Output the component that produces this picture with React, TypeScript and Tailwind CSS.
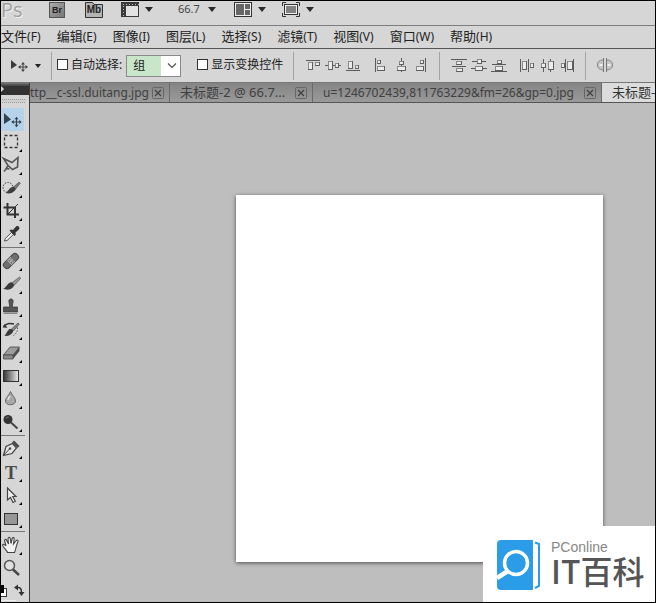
import type { ReactNode } from "react";
import clsx from "clsx";

// Photoshop CS5 workspace: application bar, menus, options bar, tabs, toolbox, canvas.

const menus = [
  ["文件", "F"],
  ["编辑", "E"],
  ["图像", "I"],
  ["图层", "L"],
  ["选择", "S"],
  ["滤镜", "T"],
  ["视图", "V"],
  ["窗口", "W"],
  ["帮助", "H"],
];

type Tool = { name: string; icon: ReactNode; active?: boolean; single?: boolean };

const toolGroups: Tool[][] = [
  [
    {
      name: "移动工具",
      active: true,
      single: true,
      icon: (
        <>
          <path d="M3 5v11l7-4.500z" fill="#33424f" />
          <path d="M15.500 10v8M11.500 14h8" stroke="#33424f" strokeWidth="1.200" />
          <path d="M15.500 8.800l2 2.500h-4zM15.500 19.200l2-2.500h-4zM10.300 14l2.500-2v4zM20.700 14l-2.500-2v4z" fill="#33424f" />
        </>
      ),
    },
    {
      name: "选框工具",
      icon: (
        <rect x="3.500" y="4.500" width="13" height="12" fill="none" stroke="#333" strokeWidth="1.300" strokeDasharray="3 2" />
      ),
    },
    {
      name: "套索工具",
      icon: (
        <path
          d="M3 17.500l2.500-3M7 11.500L2.500 4.500l8.500 4L17 3.500l-.5 9.500-5 2.500L7 11.500l-1.800 3 3.300.5"
          fill="none"
          stroke="#555"
          strokeWidth="1.600"
        />
      ),
    },
    {
      name: "快速选择工具",
      icon: (
        <>
          <circle cx="7" cy="10.500" r="5" fill="none" stroke="#333" strokeDasharray="1.500 1.300" />
          <path d="M12 10.500l6-5.500 1.300 1.200-5 6.300z" fill="#777" stroke="#444" strokeWidth=".6" />
          <path d="M4.500 16c2-.5 3-4.500 6.500-6 2.500-.5 4.500 1 3 3.500-2.500 3-6 3.500-9.500 2.500z" fill="#3d3d3d" />
        </>
      ),
    },
    {
      name: "裁剪工具",
      icon: (
        <>
          <path d="M6.500 3v11.500H18M2.500 7.500h11.500V18" fill="none" stroke="#333" strokeWidth="2" />
          <path d="M6.500 14.500L17 4" stroke="#333" />
        </>
      ),
    },
    {
      name: "吸管工具",
      icon: (
        <>
          <path d="M10.500 9.500l2 2L6 17.500l-2.500.5.8-2.500z" fill="#eee" stroke="#555" />
          <path d="M8.500 7.500l1.500-1 2 .5 3-3.500c2-1.500 4.500 1 3 3l-3.500 3 .3 2-1.300 1.500z" fill="#333" />
        </>
      ),
    },
  ],
  [
    {
      name: "修复画笔",
      icon: (
        <g transform="rotate(-45 10 11)">
          <rect x="1" y="7.500" width="18" height="7" rx="3" fill="#6e6e6e" stroke="#484848" />
          <rect x="7" y="7.500" width="6" height="7" fill="#aaa" stroke="#555" strokeWidth=".7" />
          <path d="M8.500 9.500h1M11 9.500h1M8.500 12.500h1M11 12.500h1" stroke="#333" />
        </g>
      ),
    },
    {
      name: "画笔工具",
      icon: (
        <>
          <path d="M10 10.500L18.500 4l1.300 1.200-7.300 7.800z" fill="#999" stroke="#555" strokeWidth=".7" />
          <path d="M2 15.500c3-.5 3.500-4 7-6 2.500-.5 5 1.500 3.500 4-2.500 3.500-7 4-10.500 2z" fill="#3b3b3b" />
        </>
      ),
    },
    {
      name: "仿制图章",
      icon: (
        <>
          <path d="M8 6a2.200 2.200 0 1 1 4 0l-.8 5h5.300v5h-14v-5h6.300z" fill="#555" stroke="#333" strokeWidth=".7" />
          <path d="M2.500 17.500h14" stroke="#888" />
        </>
      ),
    },
    {
      name: "历史记录画笔",
      icon: (
        <>
          <path d="M3 7.500c3-4 6-3 10-2.500" fill="none" stroke="#333" strokeWidth="1.500" />
          <path d="M1.500 8.500l5 .3L3.500 5z" fill="#333" />
          <path d="M10 10.500l7-6.500 1.300 1-6 7z" fill="#888" stroke="#444" strokeWidth=".7" />
          <path d="M3 16.500c2-.5 2.500-4 5.500-6.500 2.500-.5 4.500 1 3.200 3.500-2.300 3-5.200 4-8.700 3z" fill="#3b3b3b" />
          <path d="M16.500 8.500c0 4-1 6-4 8" fill="none" stroke="#444" strokeDasharray="1.300 1.500" />
        </>
      ),
    },
    {
      name: "橡皮擦",
      icon: (
        <>
          <path d="M2.500 13L9 5h9.500L12 13z" fill="#9c9c9c" stroke="#484848" strokeWidth=".8" />
          <path d="M2.500 13H12v4H2.500z" fill="#8a8a8a" stroke="#484848" strokeWidth=".8" />
          <path d="M12 13l6.500-8v4L12 17z" fill="#4d4d4d" />
        </>
      ),
    },
    {
      name: "渐变工具",
      icon: <rect x="2.500" y="5.500" width="15" height="11" fill="url(#grad)" stroke="#333" />,
    },
    {
      name: "模糊工具",
      icon: (
        <>
          <path d="M9.500 3.500c1 3.500 5 6 5 9.500 0 5-10 5-10 0 0-3.500 4-6 5-9.500z" fill="#a8a8a8" stroke="#666" />
          <path d="M7 12c0-1.500 1.300-2.500 2-4" fill="none" stroke="#eee" strokeWidth="1.300" />
        </>
      ),
    },
    {
      name: "加深工具",
      icon: (
        <>
          <circle cx="7" cy="8.500" r="4.500" fill="#343434" />
          <path d="M10 11.500l6.500 6" stroke="#444" strokeWidth="2" />
          <path d="M5 7.500c.5-1 1.500-1.500 2.500-1.500" fill="none" stroke="#888" />
        </>
      ),
    },
  ],
  [
    {
      name: "钢笔工具",
      icon: (
        <>
          <path d="M2.500 17.500L5 8.500l6.500-3 4 4.500-4.500 5.500z" fill="#e4e4e4" stroke="#444" strokeWidth="1.200" />
          <path d="M2.500 17.500l6-6.500" stroke="#444" />
          <circle cx="9" cy="10.500" r="1.200" fill="#444" />
          <path d="M11 4.500L13 2.500l5.500 5.500-2 2z" fill="#4a4a4a" />
        </>
      ),
    },
    {
      name: "文字工具",
      icon: null,
    },
    {
      name: "路径选择工具",
      icon: <path d="M6.500 4v12l3-2.500 2.500 5 2.300-1.200-2.500-4.800H15z" fill="#eee" stroke="#444" strokeWidth="1.200" />,
    },
    {
      name: "矩形工具",
      icon: <rect x="3.500" y="6.500" width="13" height="11" fill="#969696" stroke="#333" />,
    },
  ],
  [
    {
      name: "抓手工具",
      icon: (
        <path
          d="M6.500 18.500C5.500 15.500 2 13.500 1.500 11c.8-1.300 2.500-.5 3.500 1L3.500 6.500C3.800 5 5.300 5 5.800 6.500L7.500 10 7 4.500C7.300 3 9 3 9.300 4.500l.7 5 1.200-5c.6-1.400 2-1 2 .3L12.500 10l2.700-3.500c1-1 2.300-.3 1.800 1-1 2.500-1.500 4-2 6-.3 2-1 3.500-1.500 5z"
          fill="#f2f2f2"
          stroke="#444"
          strokeWidth="1.100"
        />
      ),
    },
    {
      name: "缩放工具",
      single: true,
      icon: (
        <>
          <circle cx="8.500" cy="8.500" r="5" fill="#e0e0e0" stroke="#555" strokeWidth="1.500" />
          <path d="M12 12.500l6 5.500" stroke="#444" strokeWidth="2.400" />
        </>
      ),
    },
  ],
];

// small bevelled block, shaded on its lower right side
function Box({ x, y, w = 5, h = 5 }: { x: number; y: number; w?: number; h?: number }) {
  return (
    <>
      <rect x={x + 0.5} y={y + 0.5} width={w - 1} height={h - 1} fill="#ececec" stroke="#8a8a8a" />
      <path d={`M${x} ${y + h - 0.5}H${x + w - 0.5}V${y}`} fill="none" stroke="#5e5e5e" />
    </>
  );
}

const line = { stroke: "#5a5a5a", strokeWidth: 1 };

type Align = [string, ReactNode];

const alignEdges: Align[] = [
  ["顶对齐", <><path d="M1 3.500h14" {...line} /><Box x={3} y={5} w={5} h={8} /><Box x={10} y={5} w={5} h={4} /></>],
  ["垂直居中对齐", <><path d="M0 8.500h16" {...line} /><Box x={3} y={4} w={5} h={9} /><Box x={10} y={6} w={4} h={5} /></>],
  ["底对齐", <><path d="M1 13.500h14" {...line} /><Box x={3} y={4} w={5} h={8} /><Box x={10} y={8} w={4} h={4} /></>],
];

const alignSides: Align[] = [
  ["左对齐", <><path d="M2.500 1v14" {...line} /><Box x={4} y={3} w={4} h={4} /><Box x={4} y={9} w={8} h={5} /></>],
  ["水平居中对齐", <><path d="M8.500 1v14" {...line} /><Box x={6} y={4} w={5} h={4} /><Box x={4} y={9} w={9} h={5} /></>],
  ["右对齐", <><path d="M12.500 1v14" {...line} /><Box x={7} y={3} w={4} h={4} /><Box x={3} y={9} w={8} h={5} /></>],
];

const spreadRows: Align[] = [
  ["按顶分布", <><path d="M0 2.500h16M1 9.500h14" {...line} /><Box x={5} y={4} w={6} h={4} /><Box x={5} y={11} w={7} h={4} /></>],
  ["垂直居中分布", <><path d="M1 4.500h14M0 11.500h16" {...line} /><Box x={6} y={2} w={5} h={5} /><Box x={4} y={9} w={8} h={5} /></>],
  ["按底分布", <><path d="M1 7.500h14M0 14.500h16" {...line} /><Box x={6} y={3} w={5} h={4} /><Box x={4} y={9} w={8} h={5} /></>],
];

const spreadColumns: Align[] = [
  ["按左分布", <><path d="M1.500 2v13M9.500 2v13" {...line} /><Box x={3} y={4} w={5} h={9} /><Box x={11} y={6} w={4} h={5} /></>],
  ["水平居中分布", <><path d="M4.500 2v13M11.500 2v13" {...line} /><Box x={2} y={6} w={5} h={5} /><Box x={9} y={4} w={6} h={9} /></>],
  ["按右分布", <><path d="M6.500 2v13M14.500 2v13" {...line} /><Box x={2} y={6} w={4} h={5} /><Box x={8} y={4} w={6} h={9} /></>],
];

function AlignGroup({ items, className }: { items: Align[]; className?: string }) {
  return (
    <div className={clsx("mb-0.5 flex shrink-0 gap-1", className)}>
      {items.map(([name, icon]) => (
        <button key={name} aria-label={name}>
          <svg width="16" height="16" className="block">
            {icon}
          </svg>
        </button>
      ))}
    </div>
  );
}

function Caret({ className }: { className?: string }) {
  return (
    <svg width="8" height="5" className={clsx("shrink-0", className)}>
      <path d="M0 0h8L4 5z" fill="#2a2a2a" />
    </svg>
  );
}

function Divider({ className }: { className?: string }) {
  return <div className={clsx("h-7 w-px shrink-0 bg-[#a3a3a3]", className)} />;
}

function AppBar() {
  return (
    <header className="flex h-[25px] items-start border-b border-[#7d7d7d] bg-[#d6d6d6]">
      <div className="w-12 shrink-0 font-['Open_Sans',sans-serif] text-xl leading-[18px] text-[#a0a0a0] text-shadow-[1px_1px_0_#f0f0f0]">
        Ps
      </div>
      <button className="mt-px h-4 w-4 shrink-0 border border-[#555] bg-linear-to-br from-[#aaa] to-[#777] font-['Liberation_Sans',sans-serif] text-[9px] leading-[14px] font-bold text-[#222]">
        Br
      </button>
      {/* Mini Bridge sits on a folder shape, the raised tab is the svg behind the label */}
      <button className="relative ml-5 h-[17px] w-[18px] shrink-0 font-['Liberation_Sans',sans-serif] text-[10px] leading-[18px] font-bold text-[#222]">
        <svg width="18" height="17" className="absolute inset-0">
          <path d="M.5 16.500V1.500h7l1.500 2h8.500v13z" fill="#b4b4b4" stroke="#333" />
        </svg>
        <span className="relative">Mb</span>
      </button>
      <button aria-label="查看额外内容" className="ml-[18px] flex items-center gap-1.5">
        <svg width="18" height="16">
          <rect x="0" y="1" width="18" height="15" fill="#3a3a3a" />
          <rect x="5" y="5" width="12" height="10" fill="#e2e2e2" />
          <path d="M2 3.500h16" stroke="#bbb" strokeDasharray="1 2" />
          <path d="M2.500 5v11" stroke="#bbb" strokeDasharray="1 2" />
        </svg>
        <Caret />
      </button>
      <button className="ml-[25px] flex h-4 w-[38px] items-center justify-between font-['Noto_Sans',sans-serif] text-[11px] text-[#444]">
        66.7
        <Caret />
      </button>
      <button aria-label="排列文档" className="ml-[18px] flex items-center gap-1.5">
        <svg width="18" height="16">
          <rect x="0.500" y="1.500" width="17" height="14" fill="#eee" stroke="#333" />
          <path d="M2 3h8v11H2zM11 3h5v5h-5zM11 9h5v5h-5z" fill="#666" />
        </svg>
        <Caret />
      </button>
      <button aria-label="屏幕模式" className="ml-4 flex items-center gap-1.5">
        <svg width="18" height="16">
          <path d="M.5 5V1.500H4M14 1.500h3.500V5M17.500 12v3.500H14M4 15.500H.5V12" fill="none" stroke="#333" />
          <rect x="2.500" y="3.500" width="13" height="10" fill="#eee" stroke="#333" />
          <rect x="4" y="5" width="10" height="7" fill="#808080" />
        </svg>
        <Caret />
      </button>
    </header>
  );
}

function MenuBar() {
  return (
    <nav className="flex h-[23px] items-center gap-4 overflow-hidden border-b border-[#555] bg-[#d6d6d6] pb-0.5">
      {menus.map(([name, key]) => (
        <button key={key} className="flex shrink-0 items-baseline whitespace-nowrap text-[13px] leading-5">
          {name}
          <span className="text-xs leading-5">({key})</span>
        </button>
      ))}
    </nav>
  );
}

function OptionsBar() {
  return (
    <div className="flex h-[34px] items-center overflow-hidden border-b border-[#777] bg-[#d6d6d6] text-xs">
      <button aria-label="工具预设" className="ml-2 flex shrink-0 items-center gap-1.5">
        <svg width="20" height="16">
          <path d="M2 2v9l6-4z" fill="#3a3a3a" />
          <path d="M14 5v8M10 9h8" stroke="#444" />
          <path d="M14 4l2 2.500h-4zM14 14l2-2.500h-4zM9 9l2.500-2v4zM19 9l-2.500-2v4z" fill="#444" />
        </svg>
        <svg width="6" height="4">
          <path d="M0 0h6L3 4z" fill="#222" />
        </svg>
      </button>
      <Divider className="ml-2.5" />
      <label className="mb-0.5 ml-[5px] flex shrink-0 items-center gap-[3px] whitespace-nowrap">
        <input type="checkbox" className="h-[11px] w-[11px] appearance-none border border-[#333] bg-white" />
        自动选择:
      </label>
      <div className="relative ml-1 shrink-0">
        <select
          aria-label="自动选择"
          className="block h-[22px] w-[55px] appearance-none border border-[#8a8a8a] bg-white bg-linear-to-r from-[#c8e6c9] from-[34px] to-white to-[34px] pl-1.5 text-xs"
        >
          <option>组</option>
          <option>图层</option>
        </select>
        <svg width="10" height="6" className="pointer-events-none absolute top-2 right-1">
          <path d="M1 .5l4 4 4-4" fill="none" stroke="#555" strokeWidth="1.200" />
        </svg>
      </div>
      <label className="mb-0.5 ml-4 flex shrink-0 items-center gap-[3px] whitespace-nowrap">
        <input type="checkbox" className="h-[11px] w-[11px] appearance-none border border-[#333] bg-white" />
        显示变换控件
      </label>
      <Divider className="ml-2.5" />
      <AlignGroup items={alignEdges} className="ml-[11px]" />
      <AlignGroup items={alignSides} className="ml-3" />
      <Divider className="ml-2.5" />
      <AlignGroup items={spreadRows} className="ml-[11px]" />
      <AlignGroup items={spreadColumns} className="ml-3" />
      <Divider className="ml-2.5" />
      <button aria-label="自动对齐图层" className="mb-0.5 ml-2.5 shrink-0">
        <svg width="18" height="16" className="block">
          <path d="M7.500 3C3 3 1.500 5 1.500 8s1.500 4.500 6 5z" fill="#c4c4c4" stroke="#888" />
          <path d="M10.500 3c4.500 0 6 2 6 5s-1.500 4.500-6 5z" fill="#c4c4c4" stroke="#888" />
          <path d="M7.500 1v14M10.500 1v14" stroke="#777" />
          <path d="M3.500 8h3M11.500 8h3" stroke="#eee" strokeWidth="2" />
        </svg>
      </button>
    </div>
  );
}

function Tab({ title, active, className }: { title: string; active?: boolean; className?: string }) {
  return (
    <div
      className={clsx(
        "flex shrink-0 items-center border-r pt-px whitespace-nowrap",
        active ? "border-[#dcdcdc] bg-[#dcdcdc] text-[#333]" : "border-[#6a6a6a] text-[#404040]",
        className
      )}
    >
      <button role="tab" aria-selected={!!active}>
        {title}
      </button>
      <button aria-label="关闭" className="ml-auto">
        <svg width="12" height="12" className="block">
          <rect x=".5" y=".5" width="11" height="11" rx="1" fill="none" stroke="#666" />
          <path d="M3 3l6 6M9 3l-6 6" stroke="#404040" strokeWidth="1.200" />
        </svg>
      </button>
    </div>
  );
}

function Toolbox() {
  return (
    <aside className="flex w-[29px] shrink-0 flex-col border-r border-[#3a3a3a] bg-[#d6d6d6]">
      <div className="h-3 bg-linear-to-b from-[#777] to-[#333] to-30%">
        <svg width="4" height="12" className="block">
          <path d="M0 3l3 3-3 3z" fill="#ddd" />
        </svg>
      </div>
      <svg width="28" height="13" className="block">
        <path d="M1 4.500h23M1 7.500h23" stroke="#999" strokeDasharray="1 1" />
        <path d="M2 6h23" stroke="#bbb" strokeDasharray="1 1" />
      </svg>
      {toolGroups.map((group, i) => (
        <div key={i}>
          {i > 0 && (
            <div className="h-1 w-6 pt-px">
              <div className="h-px bg-[#777]" />
            </div>
          )}
          {group.map((tool) => (
            <button
              key={tool.name}
              aria-label={tool.name}
              className={clsx("relative block h-[23px] w-[23px]", tool.active && "bg-[#b4d3ea]")}
            >
              {tool.icon ? (
                <svg width="23" height="23" className="block">
                  {tool.icon}
                </svg>
              ) : (
                <span className="block w-5 text-center font-['Liberation_Serif',serif] text-lg leading-[22px] font-bold text-[#4a4a4a]">
                  T
                </span>
              )}
              {!tool.single && (
                <svg width="3" height="3" className="absolute right-0.5 bottom-0.5">
                  <path d="M3 0v3H0z" fill="#000" />
                </svg>
              )}
            </button>
          ))}
        </div>
      ))}
      <button aria-label="前景色和背景色" className="block">
        <svg width="28" height="22" className="block">
          <defs>
            <linearGradient id="grad">
              <stop offset="0" stopColor="#333" />
              <stop offset="1" stopColor="#eee" />
            </linearGradient>
          </defs>
          <rect x="-4.500" y="8.500" width="10" height="8" fill="#fff" stroke="#333" />
          <rect x="0" y="5" width="3" height="8" fill="#000" />
          <path d="M16 7.500c3.500-.5 4.500 1.500 4.500 5" fill="none" stroke="#333" strokeWidth="1.500" />
          <path d="M13 7.500l4-3v6zM20.500 16l-3-4h6z" fill="#333" />
          <path d="M0 20.500h15" stroke="#eee" />
        </svg>
      </button>
    </aside>
  );
}

function Watermark() {
  return (
    <div className="absolute right-0 bottom-0 flex h-[76px] w-[172px] items-start bg-white pt-[14px] pl-3.5">
      <svg width="44" height="50" className="shrink-0">
        <path d="M4 0h32v50H4a4 4 0 0 1-4-4V4a4 4 0 0 1 4-4z" fill="#2b9ce8" />
        <path d="M38 2.500l4 1.500v42l-4 2" fill="none" stroke="#2b9ce8" strokeWidth="2" />
        <circle cx="19" cy="23" r="11.500" fill="none" stroke="#fff" strokeWidth="3.500" />
        <path d="M11 31L0 38" stroke="#fff" strokeWidth="4.500" />
      </svg>
      <div className="ml-2.5 whitespace-nowrap">
        <div className="font-['Liberation_Sans',sans-serif] text-sm leading-[14px] text-[#888]">PConline</div>
        <div className="font-['Noto_Sans_CJK_SC',sans-serif] text-[32px] leading-8 font-medium text-[#555]">IT百科</div>
      </div>
    </div>
  );
}

export default function App() {
  return (
    <div className="flex min-h-screen flex-col overflow-hidden border border-black font-['Noto_Sans','Noto_Sans_CJK_SC',sans-serif] text-[#222]">
      <AppBar />
      <MenuBar />
      <OptionsBar />
      <div className="flex flex-1">
        <Toolbox />
        <main className="relative flex min-w-0 flex-1 flex-col bg-[#bebebe]">
          <div
            role="tablist"
            className="flex h-5 overflow-hidden border-b border-[#555] bg-linear-to-b from-[#858585] to-[#9a9a9a] text-xs"
          >
            <Tab title="ttp__c-ssl.duitang.jpg" className="w-[140px] pr-[5px]" />
            <Tab title="未标题-2 @ 66.7..." className="w-[143px] pr-[5px] pl-2.5 text-[13px]" />
            <Tab title="u=1246702439,811763229&fm=26&gp=0.jpg" className="w-[289px] pr-[5px] pl-2.5" />
            <Tab title="未标题-" active className="w-[140px] pr-[5px] pl-2.5 text-[13px]" />
          </div>
          <div className="mt-[92px] mb-10 ml-[206px] h-[367px] w-[367px] bg-white shadow-[0_1px_4px_rgba(0,0,0,0.6)]" />
          <Watermark />
        </main>
      </div>
    </div>
  );
}
